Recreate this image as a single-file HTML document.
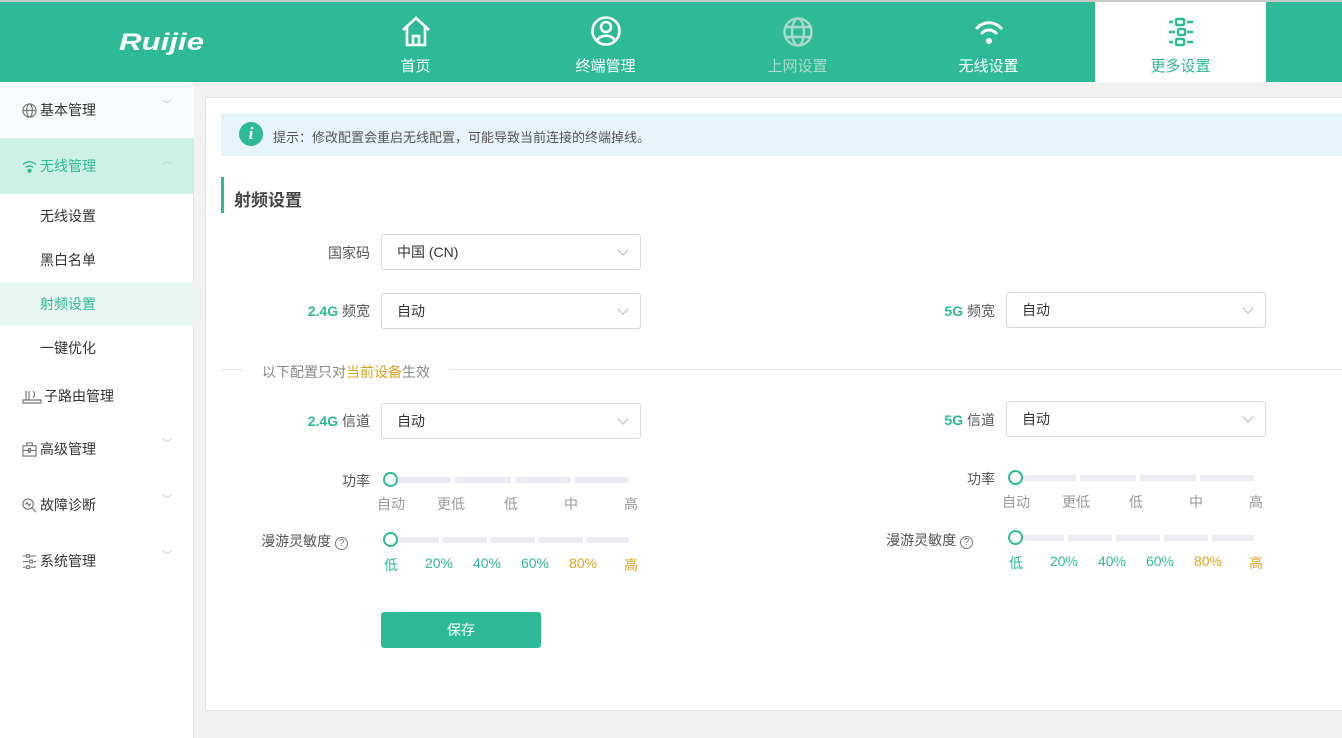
<!DOCTYPE html>
<html><head><meta charset="utf-8"><style>
*{margin:0;padding:0;box-sizing:border-box}
body{width:1342px;height:738px;overflow:hidden;font-family:"Liberation Sans","Noto Sans CJK SC",sans-serif;font-size:14px;color:#333;background:#f2f2f2;position:relative}
.abs{position:absolute}
#top{left:0;top:0;width:1342px;height:82px;background:#2eba96;border-top:2px solid #c8c8c8}
.nav{position:absolute;top:0;width:171px;height:80px;text-align:center;color:#fff;font-size:15px}
.nav svg{position:absolute;left:70px;top:13px}
.nav span{position:absolute;left:0;right:0;top:53px}
#side{left:0;top:82px;width:194px;height:656px;background:#fff;border-right:1px solid #e3e3e3}
.mi{position:absolute;left:0;width:194px;height:56px;line-height:56px;padding-left:40px;font-size:14px;color:#333}
.mi .ic{position:absolute;left:22px;top:21px}
.mi .ar{position:absolute;left:162px;top:-4px;color:#c4c4c4;font-size:10px}
.sub{position:absolute;left:0;width:194px;height:44px;line-height:44px;padding-left:40px;font-size:14px;color:#333}
#card{left:205px;top:97px;width:1140px;height:614px;background:#fff;border:1px solid #e3e3e3}
.lbl{position:absolute;text-align:right;font-size:14px;color:#555;width:150px}
.g{color:#2eba96;font-weight:bold}
.sel{position:absolute;width:260px;height:36px;border:1px solid #d9d9d9;border-radius:3px;padding-left:15px;line-height:34px;font-size:14px;color:#333}
.sel:after{content:"";position:absolute;right:13px;top:11px;width:7px;height:7px;border-right:1px solid #bbb;border-bottom:1px solid #bbb;transform:rotate(45deg)}
.track{position:absolute;height:6px;background:#ebedf3}
.knob{position:absolute;width:15px;height:15px;border:2px solid #2eba96;border-radius:50%;background:#fff}
.tk{position:absolute;font-size:14px;color:#999;width:40px;text-align:center}
</style></head><body>
<div id="top" class="abs">
  <div class="abs" style="left:119px;top:27px;color:#fff;font-size:24px;font-weight:bold;font-style:italic;transform:scaleX(1.3);transform-origin:left">Ruijie</div>
  <div class="nav" style="left:330px"><svg width="32" height="34" viewBox="0 0 32 34" fill="none" stroke="#fff" stroke-width="2.6"><path d="M3 15 L16 3 L29 15 M7 12 V30 H25 V12 M13 30 V21 H19 V30"/></svg><span>首页</span></div>
  <div class="nav" style="left:520px"><svg width="32" height="34" viewBox="0 0 32 34" fill="none" stroke="#fff" stroke-width="2.6"><circle cx="16" cy="16" r="13.5"/><circle cx="16" cy="12" r="5"/><path d="M7 26 C9 19 23 19 25 26"/></svg><span>终端管理</span></div>
  <div class="nav" style="left:712px;color:#a8dccb"><svg width="32" height="34" viewBox="0 0 32 34" fill="none" stroke="#a9d9c9" stroke-width="2.4"><circle cx="16" cy="17" r="13.5"/><ellipse cx="16" cy="17" rx="6" ry="13.5"/><path d="M3 12 H29 M3 22 H29"/></svg><span>上网设置</span></div>
  <div class="nav" style="left:903px"><svg width="32" height="34" viewBox="0 0 32 34" fill="none" stroke="#fff" stroke-width="3" stroke-linecap="round"><path d="M4 13 C11 6 21 6 28 13 M9 18 C13 14 19 14 23 18"/><circle cx="16" cy="26" r="3" fill="#fff" stroke="none"/></svg><span>无线设置</span></div>
  <div class="nav" style="left:1095px;background:#fff;color:#2eba96"><svg width="32" height="34" viewBox="0 0 32 34" fill="none" stroke="#2eba96" stroke-width="2.4"><path d="M4 7 H8 M22 7 H28 M4 17 H10 M22 17 H28 M4 27 H8 M22 27 H28"/><rect x="11" y="4" width="8" height="6" rx="1"/><rect x="13" y="14" width="7" height="6" rx="1"/><rect x="11" y="24" width="8" height="6" rx="1"/></svg><span>更多设置</span></div>
</div>
<div id="side" class="abs">
  <div class="mi" style="top:0;background:#f9fcfd"><svg class="ic" width="15" height="15" viewBox="0 0 16 16" fill="none" stroke="#777" stroke-width="1.3"><circle cx="8" cy="8" r="7"/><ellipse cx="8" cy="8" rx="3" ry="7"/><path d="M1 8H15"/></svg>基本管理<span class="ar">﹀</span></div>
  <div class="mi" style="top:56px;background:#cdf1e5;color:#2eba96"><svg class="ic" width="15" height="15" viewBox="0 0 16 16" fill="none" stroke="#2eba96" stroke-width="1.5"><path d="M1 6C5 2 11 2 15 6M4 9C6 7 10 7 12 9"/><circle cx="8" cy="12.5" r="1.5" fill="#2eba96"/></svg>无线管理<span class="ar">︿</span></div>
  <div class="sub" style="top:112px">无线设置</div>
  <div class="sub" style="top:156px">黑白名单</div>
  <div class="sub" style="top:200px;background:#e8f7f1;color:#2eba96">射频设置</div>
  <div class="sub" style="top:244px">一键优化</div>
  <div class="mi" style="top:286px;padding-left:44px"><svg class="ic" width="20" height="15" viewBox="0 0 20 15" fill="none" stroke="#777" stroke-width="1.2"><path d="M1 11H19V14H1Z M4 2V11 M7 2V11 M11 2C13 4 13 7 11 9"/></svg>子路由管理</div>
  <div class="mi" style="top:339px"><svg class="ic" width="15" height="15" viewBox="0 0 16 16" fill="none" stroke="#777" stroke-width="1.2"><rect x="1" y="4" width="14" height="11"/><path d="M5 4V1H11V4M1 9H15M7 7H9V11H7Z"/></svg>高级管理<span class="ar">﹀</span></div>
  <div class="mi" style="top:395px"><svg class="ic" width="15" height="15" viewBox="0 0 16 16" fill="none" stroke="#777" stroke-width="1.3"><circle cx="6.5" cy="6.5" r="5.5"/><path d="M10.5 10.5L15 15M3.5 7L5.5 5L7.5 8L9.5 6"/></svg>故障诊断<span class="ar">﹀</span></div>
  <div class="mi" style="top:451px"><svg class="ic" width="15" height="15" viewBox="0 0 16 16" fill="none" stroke="#777" stroke-width="1.2"><path d="M1 2H4M9 2H15M1 8H7M12 8H15M1 14H4M9 14H15"/><rect x="5" y="0.5" width="3" height="3"/><rect x="8" y="6.5" width="3" height="3"/><rect x="5" y="12.5" width="3" height="3"/></svg>系统管理<span class="ar">﹀</span></div>
</div>
<div id="card" class="abs"></div>
<div class="abs" style="left:221px;top:113px;width:1121px;height:43px;background:#e8f4fc"></div>
<div class="abs" style="left:239px;top:122px;width:24px;height:24px;border-radius:50%;background:#2eba96;color:#fff;font:italic bold 17px 'Liberation Serif',serif;text-align:center;line-height:24px">i</div>
<div class="abs" style="left:273px;top:127px;font-size:13px;color:#555">提示：修改配置会重启无线配置，可能导致当前连接的终端掉线。</div>
<div class="abs" style="left:221px;top:177px;width:3px;height:36px;background:#2eba96"></div>
<div class="abs" style="left:234px;top:186px;font-size:17px;font-weight:bold;color:#444">射频设置</div>

<div class="lbl" style="left:220px;top:243px">国家码</div>
<div class="sel" style="left:381px;top:234px">中国 (CN)</div>
<div class="lbl" style="left:220px;top:301px"><span class="g">2.4G</span> 频宽</div>
<div class="sel" style="left:381px;top:293px">自动</div>
<div class="lbl" style="left:845px;top:301px"><span class="g">5G</span> 频宽</div>
<div class="sel" style="left:1006px;top:292px">自动</div>

<div class="abs" style="left:221px;top:369px;width:22px;height:1px;background:#e5e5e5"></div>
<div class="abs" style="left:262px;top:362px;font-size:14px;color:#888">以下配置只对<span style="color:#d9a520">当前设备</span>生效</div>
<div class="abs" style="left:450px;top:369px;width:892px;height:1px;background:#e5e5e5"></div>

<div class="lbl" style="left:220px;top:411px"><span class="g">2.4G</span> 信道</div>
<div class="sel" style="left:381px;top:403px">自动</div>
<div class="lbl" style="left:845px;top:410px"><span class="g">5G</span> 信道</div>
<div class="sel" style="left:1006px;top:401px">自动</div>

<div class="lbl" style="left:220px;top:471px">功率</div>
<div class="track" style="left:395px;top:477px;width:234px;background:linear-gradient(90deg,#ebedf3 0 56px,#fff 56px 60px,#ebedf3 60px 116px,#fff 116px 120px,#ebedf3 120px 176px,#fff 176px 180px,#ebedf3 180px)"></div>
<div class="knob" style="left:383px;top:472px"></div>
<div class="tk" style="left:371px;top:494px">自动</div><div class="tk" style="left:431px;top:494px">更低</div><div class="tk" style="left:491px;top:494px">低</div><div class="tk" style="left:551px;top:494px">中</div><div class="tk" style="left:611px;top:494px">高</div>
<div class="lbl" style="left:198px;top:531px">漫游灵敏度 <span style="display:inline-block;width:13px;height:13px;border:1px solid #777;border-radius:50%;font-size:10px;line-height:11px;text-align:center;color:#777">?</span></div>
<div class="track" style="left:395px;top:537px;width:234px;background:linear-gradient(90deg,#ebedf3 0 44px,#fff 44px 48px,#ebedf3 48px 92px,#fff 92px 96px,#ebedf3 96px 140px,#fff 140px 144px,#ebedf3 144px 188px,#fff 188px 192px,#ebedf3 192px)"></div>
<div class="knob" style="left:383px;top:532px"></div>
<div class="tk" style="left:371px;top:555px;color:#2eba96">低</div><div class="tk" style="left:419px;top:555px;color:#2eba96">20%</div><div class="tk" style="left:467px;top:555px;color:#2eba96">40%</div><div class="tk" style="left:515px;top:555px;color:#2eba96">60%</div><div class="tk" style="left:563px;top:555px;color:#d9a520">80%</div><div class="tk" style="left:611px;top:555px;color:#d9a520">高</div>

<div class="lbl" style="left:845px;top:469px">功率</div>
<div class="track" style="left:1020px;top:475px;width:234px;background:linear-gradient(90deg,#ebedf3 0 56px,#fff 56px 60px,#ebedf3 60px 116px,#fff 116px 120px,#ebedf3 120px 176px,#fff 176px 180px,#ebedf3 180px)"></div>
<div class="knob" style="left:1008px;top:470px"></div>
<div class="tk" style="left:996px;top:492px">自动</div><div class="tk" style="left:1056px;top:492px">更低</div><div class="tk" style="left:1116px;top:492px">低</div><div class="tk" style="left:1176px;top:492px">中</div><div class="tk" style="left:1236px;top:492px">高</div>
<div class="lbl" style="left:823px;top:530px">漫游灵敏度 <span style="display:inline-block;width:13px;height:13px;border:1px solid #777;border-radius:50%;font-size:10px;line-height:11px;text-align:center;color:#777">?</span></div>
<div class="track" style="left:1020px;top:535px;width:234px;background:linear-gradient(90deg,#ebedf3 0 44px,#fff 44px 48px,#ebedf3 48px 92px,#fff 92px 96px,#ebedf3 96px 140px,#fff 140px 144px,#ebedf3 144px 188px,#fff 188px 192px,#ebedf3 192px)"></div>
<div class="knob" style="left:1008px;top:530px"></div>
<div class="tk" style="left:996px;top:553px;color:#2eba96">低</div><div class="tk" style="left:1044px;top:553px;color:#2eba96">20%</div><div class="tk" style="left:1092px;top:553px;color:#2eba96">40%</div><div class="tk" style="left:1140px;top:553px;color:#2eba96">60%</div><div class="tk" style="left:1188px;top:553px;color:#d9a520">80%</div><div class="tk" style="left:1236px;top:553px;color:#d9a520">高</div>

<div class="abs" style="left:381px;top:612px;width:160px;height:36px;background:#2eba96;border-radius:3px;color:#fff;text-align:center;line-height:36px;font-size:14px">保存</div>
</body></html>
